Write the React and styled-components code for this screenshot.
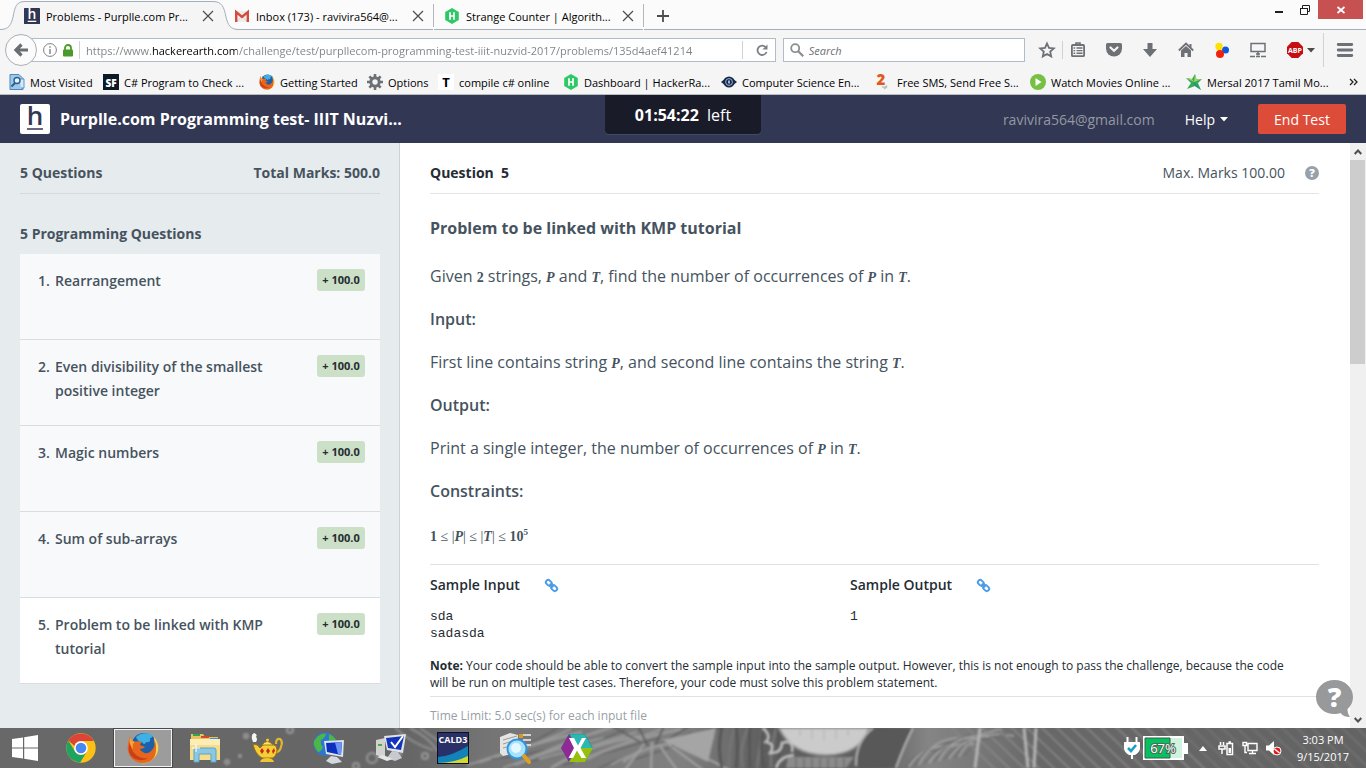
import React from "react";
import styled, { createGlobalStyle, css } from "styled-components";

const Global = createGlobalStyle`
  *, *::before, *::after { box-sizing: border-box; }
  body { margin: 0; font-family: "Open Sans", "Noto Sans", sans-serif; font-size: 14px; color: #46535e; }
  button, input { font: inherit; color: inherit; }
  button { border: 0; padding: 0; background: none; }
  a { color: inherit; text-decoration: none; }
  h1, h2, h3, p, ol, ul, pre { margin: 0; padding: 0; }
  ol, ul { list-style: none; }
  svg { display: block; flex: none; overflow: visible; }
`;

const Screen = styled.div`
  display: flex;
  flex-direction: column;
  height: 100vh;
  overflow: hidden;
`;

/* ---------- browser chrome ---------- */

const Chrome = styled.header`
  flex: none;
  font-size: 11px;
  color: #000;
  background: #f5f5f6;
  border-bottom: 1px solid #b9bcc0;
`;

const TabStrip = styled.div`
  display: flex;
  height: 30px;
  padding-left: 14px;
  background: #fbfbfb;
  border-bottom: 1px solid #a3afbb;
`;

const Tab = styled.div`
  position: relative;
  display: flex;
  align-items: center;
  gap: 6px;
  width: 210px;
  height: 31px;
  padding: 1px 9px 0 10px;
  border-right: 1px solid transparent;
  ${(p) => p.$divided && css`
    border-image: linear-gradient(#fbfbfb 5px, #b4b7ba 5px, #b4b7ba 26px, #fbfbfb 26px) 1;
    border-style: solid;
    border-width: 0 1px 0 0;
  `}
`;

const TabShape = styled.svg`
  position: absolute;
  left: -14px;
  top: 0;
`;

const TabTitle = styled.button`
  position: relative;
  flex: 1;
  min-width: 0;
  text-align: left;
  white-space: nowrap;
`;

const TabIcon = styled.span`
  position: relative;
`;

const TabClose = styled.button`
  position: relative;
  width: 12px;
`;

const NewTab = styled.button`
  margin: 2px 0 0 13px;
`;

const WindowButtons = styled.div`
  display: flex;
  align-items: flex-start;
  margin-left: auto;
  padding-right: 3px;
`;

const WindowButton = styled.button`
  display: grid;
  place-items: center;
  width: ${(p) => (p.$close ? 45 : 26)}px;
  height: 19px;
  background: ${(p) => (p.$close ? "#c75050" : "transparent")};
`;

const Toolbar = styled.div`
  display: flex;
  align-items: center;
  height: 40px;
  padding-left: 5px;
`;

const BackButton = styled.button`
  position: relative;
  z-index: 1;
  display: grid;
  place-items: center;
  width: 32px;
  height: 32px;
  border: 1px solid #a9afb6;
  border-radius: 50%;
  background: #fbfbfb;
`;

const AddressBar = styled.div`
  display: flex;
  flex: 743;
  align-items: center;
  gap: 6px;
  min-width: 0;
  height: 24px;
  margin-left: -7px;
  padding-left: 12px;
  border: 1px solid #b1bcc6;
  background: #fff;
`;

const Divider = styled.span`
  width: 1px;
  height: ${(p) => p.$h || 18}px;
  background: #d0d2d5;
`;

const AddressInput = styled.input`
  flex: 1;
  min-width: 0;
  padding: 0;
  border: 0;
  outline: 0;
  color: transparent;
  background: linear-gradient(90deg, #7c8085 65px, #000 65px, #000 151px, #7c8085 151px);
  background-clip: text;
  -webkit-background-clip: text;
`;

const ReloadButton = styled.button`
  display: grid;
  place-items: center;
  width: 26px;
`;

const SearchBox = styled.label`
  display: flex;
  flex: 238;
  align-items: center;
  gap: 5px;
  height: 24px;
  margin-left: 7px;
  padding-left: 6px;
  border: 1px solid #b1bcc6;
  background: #fff;
`;

const SearchInput = styled.input`
  flex: 1;
  min-width: 0;
  padding: 0;
  border: 0;
  outline: 0;
  background: none;
  &::placeholder { color: #6d7074; font-style: italic; opacity: 1; }
`;

const Tools = styled.div`
  display: flex;
  flex: none;
  align-items: center;
  padding: 0 4px 0 13px;
`;

const ToolButton = styled.button`
  display: flex;
  justify-content: center;
  align-items: center;
  gap: 4px;
  width: ${(p) => p.$w || 36}px;
`;

const Bookmarks = styled.nav`
  display: flex;
  align-items: center;
  height: 24px;
  padding: 0 8px 0 9px;
`;

const Bookmark = styled.a`
  display: flex;
  flex: none;
  align-items: center;
  gap: 5px;
  width: ${(p) => p.$w}px;
  white-space: nowrap;
`;

const MoreBookmarks = styled.button`
  margin-left: auto;
`;

/* ---------- test page ---------- */

const TestBar = styled.header`
  display: grid;
  flex: none;
  grid-template-columns: 1fr auto 1fr;
  height: 48px;
  padding: 0 20px;
  color: #fff;
  background: #323754;
`;

const Brand = styled.div`
  display: flex;
  align-items: center;
  gap: 10px;
  height: 48px;
`;

const BrandTitle = styled.h1`
  font-size: 16px;
  font-weight: 700;
  white-space: nowrap;
`;

const Timer = styled.div`
  width: 156px;
  height: 39px;
  border-radius: 0 0 4px 4px;
  font-size: 16px;
  line-height: 40px;
  text-align: center;
  background: #1a1b29;
  box-shadow: 0 1px 0 #44496a;
  b { margin-right: 4px; }
`;

const Account = styled.div`
  display: flex;
  justify-content: flex-end;
  align-items: center;
  gap: 30px;
  height: 48px;
`;

const Email = styled.span`
  color: #9399a1;
`;

const HelpMenu = styled.button`
  display: flex;
  align-items: center;
  gap: 5px;
`;

const EndTest = styled.button`
  width: 88px;
  height: 30px;
  border-radius: 2px;
  background: #dd4b39;
`;

const Body = styled.div`
  position: relative;
  display: flex;
  flex: 1;
  min-height: 0;
`;

const Sidebar = styled.aside`
  flex: none;
  width: 400px;
  padding: 20px 19px 0 20px;
  border-right: 1px solid #ccd2d6;
  background: #e6ebee;
`;

const SectionHead = styled.div`
  display: flex;
  justify-content: space-between;
  padding-bottom: 10px;
  border-bottom: 1px solid ${(p) => p.$line};
  line-height: 20px;
`;

const SideTitle = styled.h2`
  font-size: 14px;
  font-weight: 700;
  line-height: 20px;
`;

const QuestionList = styled.ol`
  margin-top: 10px;
`;

const QuestionGroup = styled.section`
  margin-top: 30px;
`;

const Question = styled.a`
  display: flex;
  align-items: flex-start;
  height: 86px;
  padding: 15px 15px 0 18px;
  border-bottom: 1px solid #d9dde0;
  font-weight: 600;
  line-height: 24px;
  background: ${(p) => (p.$current ? "#fff" : "#f8f9fb")};
`;

const QuestionNumber = styled.span`
  width: 17px;
`;

const QuestionName = styled.span`
  width: 222px;
`;

const Marks = styled.span`
  width: 48px;
  margin-left: auto;
  border-radius: 3px;
  font-size: 11px;
  font-weight: 700;
  line-height: 22px;
  text-align: center;
  color: #252c33;
  background: #cbe0c6;
`;

const Problem = styled.main`
  flex: 1;
  min-width: 0;
  overflow: hidden;
  padding: 20px 31px 0 30px;
  background: #fff;
`;

const Dark = styled.b`
  color: #252c33;
  white-space: pre;
`;

const MaxMarks = styled.span`
  display: flex;
  align-items: center;
  gap: 20px;
`;

const HelpDot = styled.button`
  width: 14px;
  height: 14px;
  border-radius: 50%;
  font-size: 11px;
  font-weight: 800;
  line-height: 14px;
  color: #fff;
  background: #98a1a9;
`;

const Statement = styled.article`
  display: flex;
  flex-direction: column;
  gap: 19px;
  padding: 22px 0 12px;
  border-bottom: 1px solid #dfe1e3;
  font-size: 16px;
  line-height: 24px;
`;

const ProblemTitle = styled.h2`
  padding-bottom: 5px;
  font-size: 16px;
  font-weight: 700;
`;

const Label = styled.h3`
  font-size: 16px;
  font-weight: 600;
`;

const MathText = styled.span`
  font-family: "Liberation Serif", serif;
  font-size: 14px;
  font-weight: 700;
  font-style: ${(p) => (p.$num ? "normal" : "italic")};
  line-height: 1;
`;

const Formula = styled.p`
  font-family: "Liberation Serif", serif;
  font-size: 14px;
  line-height: 30px;
  sup { font-size: 9px; line-height: 0; font-weight: 700; }
  i { font-weight: 700; }
`;

const Samples = styled.section`
  display: grid;
  grid-template-columns: 420px 1fr;
  padding: 8px 0 15px;
  color: #252c33;
`;

const SampleHead = styled.h3`
  display: flex;
  align-items: center;
  gap: 25px;
  margin-bottom: 11px;
  font-size: 14px;
  font-weight: 600;
  line-height: 24px;
`;

const SampleText = styled.pre`
  font-family: "Liberation Mono", monospace;
  font-size: 13px;
  line-height: 17px;
`;

const Note = styled.p`
  padding-bottom: 5px;
  border-bottom: 1px solid #dfe1e3;
  font-size: 12px;
  line-height: 17px;
  color: #252c33;
  b { font-weight: 700; }
`;

const Limit = styled.p`
  padding-top: 9px;
  font-size: 12px;
  line-height: 20px;
  color: #989fa6;
`;

const ScrollBar = styled.div`
  display: flex;
  flex: none;
  flex-direction: column;
  width: 16px;
  background: #f0f0f0;
`;

const ScrollArrow = styled.button`
  display: grid;
  place-items: center;
  height: 17px;
`;

const ScrollTrack = styled.div`
  flex: 1;
`;

const ScrollThumb = styled.div`
  width: 15px;
  height: 37%;
  background: #cdcdcd;
`;

const HelpBubble = styled.button`
  position: absolute;
  right: 13px;
  bottom: 10px;
`;

/* ---------- taskbar ---------- */

const Taskbar = styled.footer`
  position: relative;
  display: flex;
  flex: none;
  height: 40px;
  background: #666;
`;

const Wallpaper = styled.svg`
  position: absolute;
  inset: 0;
  width: 100%;
  height: 100%;
  overflow: hidden;
`;

const TaskButton = styled.button`
  position: relative;
  display: grid;
  place-items: center;
  width: ${(p) => (p.$start ? 50 : 62)}px;
  ${(p) => p.$active && css`
    width: 58px;
    margin: 1px 2px;
    border: 1px solid #f2f2f2;
    background: #9c9c9c;
    outline: 1px solid #4a4a4a;
  `}
`;

const Tray = styled.div`
  position: relative;
  display: flex;
  align-items: center;
  gap: 8px;
  margin-left: auto;
  padding-right: 10px;
  color: #fff;
`;

const Power = styled.div`
  display: flex;
  align-items: center;
  gap: 3px;
`;

const HiddenIcons = styled.button`
  display: grid;
  place-items: center;
  width: 14px;
`;

const Clock = styled.button`
  width: 66px;
  font-size: 11px;
  line-height: 17px;
  text-align: center;
  white-space: nowrap;
`;

/* ---------- icons ---------- */

const Svg = ({ w = 16, h = w, box, children, ...rest }) => (
  <svg width={w} height={h} viewBox={box || `0 0 ${w} ${h}`} fill="none" aria-hidden="true" {...rest}>{children}</svg>
);

const SANS = '"Open Sans", sans-serif';

const HLogo = ({ size = 30, light }) => (
  <Svg w={size} box="0 0 30 30">
    <rect width="30" height="30" rx={light ? 2 : 1} fill={light ? "#fff" : "#323754"} />
    <text x="15" y="21" textAnchor="middle" fontFamily={SANS} fontSize="26" fontWeight="600" fill={light ? "#323754" : "#fff"}>h</text>
    <path d="M7 25h16" stroke={light ? "#323754" : "#fff"} strokeWidth={light ? 1.5 : 2.4} />
  </Svg>
);

const Gmail = () => (
  <Svg>
    <path d="M1 3h14v11H1z" fill="#eee" />
    <path d="M3.2 13 8 8.4 12.8 13" stroke="#d5d5d5" />
    <path d="M2.2 14V4l5.8 5 5.8-5v10" stroke="#d54b3d" strokeWidth="2.4" />
  </Svg>
);

const HackerRank = () => (
  <Svg>
    <path d="M8 0 14.8 4v8L8 16 1.2 12V4z" fill="#2ec866" />
    <path d="M6 4.2v7.6M10 4.2v7.6M6 8h4" stroke="#fff" strokeWidth="1.7" />
  </Svg>
);

const Cross = () => (
  <Svg w={12}><path d="m1 1 10 10M11 1 1 11" stroke="#4c4c4c" strokeWidth="1.2" /></Svg>
);

const Firefox = ({ size = 16 }) => (
  <Svg w={size} box="0 0 32 32">
    <circle cx="17" cy="13.500" r="12.500" fill="#1d5fa8" />
    <path d="M9 5c4-4 11-5 16-2 1 2 0 3-2 3 1 3-1 5-4 4-1 3-3 2-4 0-3 0-5-2-6-5z" fill="#3fb0e3" />
    <path d="M27 5c5 6 6 14 1 20-4 5-9 7-14 6 8-3 14-8 14-16 0-4-1-7-1-10z" fill="#ffd24a" />
    <path d="M3 4C2 8 0 13 1 19c2 8 8 12 15 12 8 0 13-5 13-14 0-3 0-5-1-8 0 4-1 7-3 9-3 4-7 4-9 2-2-1-3-2-3-3 2 0 4-1 5-2-1-1-4-1-5-2 0-1 1-2 2-3-3-1-6-1-8 0-2-1-3-3-4-6z" fill="#e8661b" />
    <path d="M4 9c-1 4 0 9 4 13 3 3 8 5 13 4-7 5-17 1-19-6-1-4 0-8 2-11z" fill="#c8401a" />
    <path d="M3 5c1 2 2 4 5 5-2 1-3 4-2 7-3-3-4-8-3-12z" fill="#f7a23c" />
  </Svg>
);

const MostVisited = () => (
  <Svg>
    <path d="M1 .5h9l4 4v11H1z" fill="#9fc9ec" stroke="#4c87b8" />
    <path d="M11 5h4v9h-3" fill="#d7eafa" stroke="#5b95c4" />
    <circle cx="8" cy="6.500" r="3" fill="#e8f5ff" stroke="#2d5f8c" strokeWidth="1.400" />
    <path d="m6 9-3.500 3.500" stroke="#2d5f8c" strokeWidth="2" />
  </Svg>
);

const TextIcon = ({ t, bg, fg, size = 13, w = 700 }) => (
  <Svg>
    <rect width="16" height="16" fill={bg} />
    <text x="8" y="12.500" textAnchor="middle" fontFamily={SANS} fontSize={size} fontWeight={w} fill={fg}>{t}</text>
  </Svg>
);

const Gear = () => (
  <Svg>
    <circle cx="8" cy="8" r="4.200" stroke="#6d7074" strokeWidth="3" />
    {[0, 45, 90, 135].map((a) => (
      <path key={a} d="M8 0v3M8 13v3" stroke="#6d7074" strokeWidth="2.600" transform={`rotate(${a} 8 8)`} />
    ))}
  </Svg>
);

const Eye = () => (
  <Svg>
    <path d="M0 8q3-2 4-4 4-3 8 0 1 2 4 4-3 2-4 4-4 3-8 0-1-2-4-4z" fill="#14284d" />
    <circle cx="8" cy="8" r="3.400" stroke="#9fb3cf" /><path d="M7 6.500h2v3H7z" fill="#9fb3cf" />
  </Svg>
);

const Two = () => (
  <Svg>
    <text x="5" y="11" textAnchor="middle" fontFamily={SANS} fontSize="15" fontWeight="800" fill="#e2571b">2</text>
    <path d="M6 12.500q3 2 5-1M8 15l3-2" stroke="#b9c4bd" strokeWidth="1.500" />
  </Svg>
);

const Play = () => (
  <Svg><circle cx="8" cy="8" r="8" fill="#76c043" /><path d="M5.500 4v8l6-4z" fill="#fff" /></Svg>
);

const StarMark = () => (
  <Svg>
    <path d="M9 0 10.500 5.500 16 5l-4 4 3 7-6-4-8 3 4-6L0 4l6 1z" fill="#35a85c" />
    <path d="M9 0 8 8l8-3-5.500.5zM0 4l8 4L6 5z" fill="#a3d55d" />
    <path d="m8 8 7 8-6-4z" fill="#1f8f8a" />
  </Svg>
);

const G = "#6d7074";

const AbStar = () => <Svg><path d="m8 1.500 2 4.400 4.800.5-3.600 3.200 1 4.800L8 12l-4.200 2.400 1-4.800L1.200 6.400 6 5.900z" stroke={G} strokeWidth="1.800" /></Svg>;
const ListIcon = () => (
  <Svg>
    <path d="M6 3V1h4v2" stroke={G} strokeWidth="1.600" />
    <rect x="1.900" y="3" width="12.200" height="11.200" rx="1" stroke={G} strokeWidth="1.800" />
    <path d="M3.500 6h1.700M6.500 6h6M3.500 8.600h1.700M6.500 8.600h6M3.500 11.200h1.700M6.500 11.200h6" stroke={G} strokeWidth="1.400" />
  </Svg>
);
const Pocket = () => <Svg><path d="M1.500 1h13Q16 1 16 2.500v4A8 8 0 0 1 0 6.500v-4Q0 1 1.500 1z" fill={G} /><path d="m4.500 5.500 3.500 3.300 3.500-3.300" stroke="#f5f5f6" strokeWidth="2.200" strokeLinecap="round" /></Svg>;
const Down = () => <Svg><path d="M5.500 1h5v6H15l-7 8-7-8h4.500z" fill={G} /></Svg>;
const Home = () => <Svg><path d="M.8 8.500 8 1.600l7.200 6.900" stroke={G} strokeWidth="1.800" /><path d="M3 8.500 8 4l5 4.500V15H9.500v-4h-3v4H3zM11.500 2h2v4l-2-2z" fill={G} /></Svg>;
const Dots = () => <Svg><circle cx="11.500" cy="8" r="3.500" fill="#0a5be0" /><circle cx="5" cy="4.500" r="3.700" fill="#ffe100" /><circle cx="6" cy="12" r="4" fill="#f3200c" /></Svg>;
const Monitor = () => <Svg><path d="M1 1.500h14v8H1zM6 12h4M8 9.500v4" stroke={G} strokeWidth="1.500" /><path d="M0 14.500h5m6 0h5M6 14.500h4" stroke={G} strokeWidth="1.500" /></Svg>;
const Abp = () => (
  <Svg>
    <path d="M4.700 0h6.600L16 4.700v6.600L11.300 16H4.700L0 11.300V4.700z" fill="#c70d12" />
    <text x="8" y="10.500" textAnchor="middle" fontFamily={SANS} fontSize="7" fontWeight="700" fill="#fff">ABP</text>
  </Svg>
);
const Menu = () => <Svg><path d="M1.200 2.500h13.600M1.200 8h13.600M1.200 13.500h13.600" stroke={G} strokeWidth="2.800" strokeLinecap="round" /></Svg>;
const Caret = ({ c = "#4c4c4c", w = 8 }) => <Svg w={w} h={5} box="0 0 8 5"><path d="M0 0h8L4 4.500z" fill={c} /></Svg>;
const LinkIcon = () => (
  <Svg w={13}>
    <g stroke="#4a9be8" strokeWidth="1.900" transform="rotate(45 6.500 6.500)">
      <rect x="-.5" y="4.200" width="6.500" height="4.600" rx="2.300" /><rect x="7" y="4.200" width="6.500" height="4.600" rx="2.300" /><path d="M4 6.500h5" />
    </g>
  </Svg>
);

/* taskbar drawings */
const WindowsLogo = () => <Svg w={28} box="0 0 28 28"><path d="M1 5l11-1.600v10H1zM13.200 3.200 27 1v12.400H13.200zM1 14.600h11v10L1 23zM13.200 14.600H27V27l-13.800-2.200z" fill="#fff" /></Svg>;
const ChromeLogo = () => (
  <Svg w={30} box="0 0 30 30">
    <circle cx="15" cy="15" r="14.700" fill="#fbc116" />
    <path d="M2.300 7.600A14.700 14.700 0 0 1 27.800 8H15a7 7 0 0 0-6.600 4.800z" fill="#dc4437" />
    <path d="M2.300 7.600A14.700 14.700 0 0 0 14 29.700l7-11.200a7 7 0 0 1-12.600-1z" fill="#1da462" />
    <circle cx="15" cy="15" r="6.800" fill="#fff" /><circle cx="15" cy="15" r="5.300" fill="#4587f3" />
  </Svg>
);
const Folder = () => (
  <Svg w={32}>
    <path d="M2 7V2h12l2 3h13v5H2z" fill="#e9c35b" />
    <path d="M4 2h7v2H4z" fill="#2ea84a" /><path d="M12 4h8v2h-8z" fill="#d9462f" /><path d="M21 6h8v2h-8z" fill="#3f8fe0" />
    <path d="M1 7h30v21H1z" fill="#f5dd8a" /><path d="M1 7h30v6H1z" fill="#fbedb5" />
    <path d="M5 30V18q0-2 2-2h18q2 0 2 2v12h-5v-8H10v8z" fill="#8cc8e4" stroke="#5aa3c8" />
    <path d="M7 12v8M3 16h8" stroke="#fff" />
  </Svg>
);
const Lamp = () => (
  <Svg w={32}>
    <path d="M2 10q-3-7 1-9 4 1 2 4 2 2 0 5z" fill="#f5f5f5" />
    <path d="M25 12q0-6 4-5 3 2 1 8-1 5-7 6" stroke="#e3b52f" strokeWidth="2.200" />
    <path d="M2 12q5 0 7 4 6-8 16-2 3 7-3 12H11Q4 22 2 12z" fill="#f3cf36" stroke="#9a6f10" />
    <path d="M11 13q5-7 11 0z" fill="#fbe36b" stroke="#a87a14" /><circle cx="16.500" cy="8" r="1.500" fill="#f1cb39" />
    <path d="M9 30q1-4 7-4t7 4z" fill="#f0c634" />
    <path d="m11 16 2 3-2 3-2-3zM17 16l2 3-2 3-2-3zM23 16l1 3-2 3-1-3z" fill="#c92a1f" />
  </Svg>
);
const GlobePc = () => (
  <Svg w={32}>
    <circle cx="12" cy="12" r="11.500" fill="#2b78d4" />
    <path d="M4 5q6-5 9-3-1 4-5 6-1 5 2 7-2 5-5 5Q0 14 1 9zM16 2q5 2 7 6l-7 1z" fill="#4cb648" />
    <path d="m11 9 20-1-1 17-17-3z" fill="#dfe3ea" /><path d="m13 11 16-1-1 13-14-3z" fill="#0d2fc0" /><path d="m22 10.500 7-.5-1 13-3-.7z" fill="#6c94f3" />
    <path d="m18 24 6 1 5 5-10 2-6-3z" fill="#d4d8df" />
  </Svg>
);
const CheckPc = () => (
  <Svg w={32}>
    <path d="M1 8l9-2v20l-9-3z" fill="#d2d3d0" /><path d="M3 13h4" stroke="#42b23c" strokeWidth="2" />
    <path d="m9 4 22-2-3 19-16-3z" fill="#dfe3ea" /><path d="m11 6 18-2-3 14-13-2z" fill="#1233b8" />
    <path d="m16 10 4 5 8-11" stroke="#fff" strokeWidth="2" /><path d="m17 19 6 1 4 6-7 3-8-3z" fill="#c6c9ce" /><path d="m2 25 10 4 6-2-10-4z" fill="#e3e5e8" />
  </Svg>
);
const Cald = () => (
  <Svg w={32}>
    <rect x=".5" y=".5" width="31" height="31" fill="#2a3168" stroke="#0c0f22" />
    <path d="M1 25q14-1 30-11v17H1z" fill="#1283b8" /><path d="M1 31q16 0 30-7v7z" fill="#d3da2b" />
    <text x="16" y="11" textAnchor="middle" fontFamily={SANS} fontSize="9" fontWeight="700" fill="#fff">CALD3</text>
  </Svg>
);
const ServerSearch = () => (
  <Svg w={32}>
    <path d="m1 5 10-4 8 2v17L4 24 1 21z" fill="#e4e4e2" /><path d="m4 8 14-4M4 12l10-3M4 16l7-2" stroke="#9b9b98" />
    <path d="M20 2h4v4h-4zM20 8h4v4h-4z" fill="#d79b23" /><path d="M24 3h8M24 8h8M24 13h8" stroke="#f1f1f1" strokeWidth="1.500" />
    <circle cx="18" cy="17" r="9.500" fill="#a9e2ff" stroke="#2f95e0" strokeWidth="2" /><circle cx="17" cy="16" r="5" fill="#e6f8ff" />
    <path d="m25 24 5 6" stroke="#e0a01e" strokeWidth="4" strokeLinecap="round" />
  </Svg>
);
const Xamarin = () => (
  <Svg w={32}>
    <path d="M8 2h16l8 14-8 14H8L0 16z" fill="#1f9e97" />
    <path d="M8 2 0 16l8 14 8-14z" fill="#8d2a94" /><path d="M8 30h16l8-14H16z" fill="#97bf0d" /><path d="M9 2.500h14.500L31 16H16z" fill="#2db7b2" />
    <path d="M8 6h5l4 7.500L21 6h4l-5.500 10L25 26h-4.500L16 18.500 12 26H7.500L13 16z" fill="#fff" />
  </Svg>
);
const Plug = () => <Svg w={16} h={24}><path d="M3.500 1v6M12.500 1v6M8 18v5" stroke="#fff" strokeWidth="2" /><path d="M0 6h16v6q0 4-5 7H5q-5-3-5-7z" fill="#fff" /><path d="m4 12 3 3 5-6" stroke="#1a9fc9" strokeWidth="2.600" /></Svg>;
const Battery = () => (
  <Svg w={45} h={24}>
    <path d="M0 0h41v7h4v11h-4v6H0z" fill="#fff" /><path d="M2 2h37v20H2z" fill="#d0f2df" /><path d="M2 2h25v20H2z" fill="#07c160" stroke="#3d5c4a" />
    <text x="20" y="17" textAnchor="middle" fontFamily={SANS} fontSize="13" fill="#fff" stroke="#4d6b58" strokeWidth="2" paintOrder="stroke">67%</text>
  </Svg>
);
const TrayBattery = () => <Svg><path d="M2.500 2v3M5.500 2v3M1 6h6v3H1zM4 9v5" stroke="#fff" strokeWidth="1.500" /><path d="M9 3.500h5.500v11H9zM10.500 2h2.500" stroke="#fff" strokeWidth="1.500" /><path d="M10.500 8h2.500v5h-2.500z" fill="#fff" /></Svg>;
const TrayNet = () => <Svg><path d="M6 3.500h9v7H6zM7 13.500h7M10.500 10.500v3M1 2.500h3.500v3H1zM3 5.500v7h2" stroke="#fff" strokeWidth="1.400" /></Svg>;
const TrayVolume = () => <Svg><path d="M0 5.500h3L8 1v14l-5-4.500H0z" fill="#fff" /><circle cx="11" cy="11" r="4" fill="#e01b1b" stroke="#fff" /><path d="m8.500 9 5 4" stroke="#fff" strokeWidth="1.400" /></Svg>;

const range = (n) => Array.from({ length: n }, (_, i) => i);

const WallpaperArt = () => (
  <Wallpaper viewBox="0 0 1366 40" preserveAspectRatio="none" fill="none" aria-hidden="true">
    <defs>
      <linearGradient id="base" x2="1">
        <stop offset="0" stopColor="#686868" /><stop offset=".3" stopColor="#666" /><stop offset=".36" stopColor="#757575" />
        <stop offset=".5" stopColor="#808080" /><stop offset=".56" stopColor="#5e5e5e" /><stop offset=".64" stopColor="#606060" />
        <stop offset=".68" stopColor="#858585" /><stop offset=".76" stopColor="#686868" /><stop offset="1" stopColor="#636363" />
      </linearGradient>
      <filter id="soft"><feGaussianBlur stdDeviation="0.8" /></filter>
    </defs>
    <rect width="1366" height="40" fill="url(#base)" />
    <g filter="url(#soft)">
      {[[227, 34, 2], [246, 8, 2], [290, 2, 3], [356, 38, 3], [372, 30, 5], [398, 25, 3], [425, 28, 3], [240, 28, 1]].map(([x, y, r]) => (
        <circle key={x} cx={x} cy={y} r={r} stroke="#999" strokeWidth="2" />
      ))}
      <path d="M395 0q18 16 38 22M410 0q20 10 28 24M420 0l20 14" stroke="#8e8e8e" strokeWidth="2" />
      {range(16).map((i) => (
        <path key={i} d={`M${455 + i * 12} ${40 - (i % 4) * 3}Q${520 + i * 9} ${26 - (i % 3) * 6} ${560 + i * 11} ${-2 + (i % 5) * 3}`} stroke={i % 3 ? "#989898" : "#575757"} strokeWidth={1 + (i % 3)} />
      ))}
      {range(10).map((i) => (
        <path key={i} d={`M${640 + i * 4} ${14 + (i % 3) * 2}L${612 + i * 13} ${i % 2 ? 42 : -2}`} stroke={i % 2 ? "#a3a3a3" : "#606060"} strokeWidth="2" />
      ))}
      <path d="M662 12l54-12-8 34z" fill="#a5a5a5" />
      {range(9).map((i) => (
        <path key={i} d={`M${722 + i * 7} 40q${(i % 3) * 4 - 5}-20 ${(i % 2) * 6}-42`} stroke={i % 2 ? "#757575" : "#565656"} strokeWidth="3" />
      ))}
      <path d="M779 0Q792 27 826 27T869 0z" fill="#cbcbcb" stroke="#969696" strokeWidth="2" />
      <path d="M800 0v8M812 0v11M824 0v12M836 0v11M848 0v8" stroke="#b2b2b2" />
      <path d="M788 29h66l-8 11h-60z" fill="#8b8b8b" />
      {range(7).map((i) => <path key={i} d={`M${796 + i * 8} 30v10`} stroke="#747474" strokeWidth="2" />)}
      <path d="M763 0q9 8 3 14 10 2 4 11 12 0 12-10 12-4 10 9M776 40q4-12 18-13" stroke="#c0c0c0" strokeWidth="2.500" />
      <path d="M872 0q-20 16-13 40h37q6-22 17-40z" fill="#595959" /><path d="M913 0q-9 18-17 40M873 0q-18 14-17 38" stroke="#b0b0b0" strokeWidth="2" />
      {range(13).map((i) => (
        <path key={i} d={`M${904 + i * 5} ${40 - i}q14-${20 + (i % 4) * 3} ${44 + i}-${18 + (i % 5) * 3}`} stroke={i % 2 ? "#a6a6a6" : "#707070"} strokeWidth="1.500" />
      ))}
      {range(30).map((i) => (
        <path key={i} d={`M${950 + i * 15} -2l48 46`} stroke={i > 14 ? "#757575" : "#888"} strokeWidth="1.600" />
      ))}
      <path d="M980 0l-5 40M1024 0q2 20 4 40M1036 0l-2 40" stroke="#b4b4b4" strokeWidth="3" />
    </g>
  </Wallpaper>
);

/* ---------- data ---------- */

const tabs = [
  { title: "Problems - Purplle.com Pr...", icon: <HLogo size={16} />, active: true },
  { title: "Inbox (173) - ravivira564@...", icon: <Gmail />, divided: true },
  { title: "Strange Counter | Algorith...", icon: <HackerRank />, divided: true },
];

const bookmarks = [
  ["Most Visited", <MostVisited />, 94],
  ["C# Program to Check ...", <TextIcon t="SF" bg="#0b1a26" fg="#fff" size={10} w={800} />, 156],
  ["Getting Started", <Firefox />, 108],
  ["Options", <Gear />, 71],
  ["compile c# online", <TextIcon t="T" bg="#fff" fg="#000" size={13} />, 125],
  ["Dashboard | HackerRa...", <HackerRank />, 158],
  ["Computer Science En...", <Eye />, 155],
  ["Free SMS, Send Free S...", <Two />, 154],
  ["Watch Movies Online ...", <Play />, 156],
  ["Mersal 2017 Tamil Mo...", <StarMark />, 156],
];

const questions = [
  "Rearrangement",
  "Even divisibility of the smallest positive integer",
  "Magic numbers",
  "Sum of sub-arrays",
  "Problem to be linked with KMP tutorial",
];

const tasks = [
  ["Chrome", <ChromeLogo />],
  ["Firefox", <Firefox size={32} />, true],
  ["File Explorer", <Folder />],
  ["Lamp", <Lamp />],
  ["Network", <GlobePc />],
  ["System", <CheckPc />],
  ["Dictionary", <Cald />],
  ["Server search", <ServerSearch />],
  ["Xamarin", <Xamarin />],
];

const P = () => <MathText>P</MathText>;
const T = () => <MathText>T</MathText>;

/* ---------- sections ---------- */

function BrowserChrome() {
  return (
    <Chrome>
      <TabStrip>
        {tabs.map((t) => (
          <Tab key={t.title} $divided={t.divided}>
            {t.active && (
              <TabShape width="240" height="31" viewBox="0 0 240 31" fill="none" aria-hidden="true">
                <path d="M0 29.500C9 29.500 11 25 13 17 15 7 16 1.500 25 1.500H213C222 1.500 224 7 226 17 228 25 230 29.500 239 29.500V31H0z" fill="#f5f5f6" />
                <path d="M0 29.500C9 29.500 11 25 13 17 15 7 16 1.500 25 1.500H213C222 1.500 224 7 226 17 228 25 230 29.500 239 29.500" stroke="#a3afbb" />
              </TabShape>
            )}
            <TabIcon>{t.icon}</TabIcon>
            <TabTitle>{t.title}</TabTitle>
            <TabClose aria-label="Close tab"><Cross /></TabClose>
          </Tab>
        ))}
        <NewTab aria-label="New tab"><Svg w={12}><path d="M6 0v12M0 6h12" stroke="#4c4c4c" strokeWidth="1.800" /></Svg></NewTab>
        <WindowButtons>
          <WindowButton aria-label="Minimize"><Svg w={10}><path d="M1 7h8" stroke="#1e1e1e" strokeWidth="2" /></Svg></WindowButton>
          <WindowButton aria-label="Restore"><Svg w={10}><path d="M.5 3.500h7v6h-7zM2.500 3V.5h7v6H8M0 3.500h8" stroke="#1e1e1e" /></Svg></WindowButton>
          <WindowButton $close aria-label="Close"><Svg w={8}><path d="m.5 1 7 6M7.500 1l-7 6" stroke="#fff" strokeWidth="1.800" /></Svg></WindowButton>
        </WindowButtons>
      </TabStrip>
      <Toolbar>
        <BackButton aria-label="Back"><Svg w={16}><path d="M15 8H4M8.500 2.500 3 8l5.500 5.500" stroke="#6a6d71" strokeWidth="3.200" /></Svg></BackButton>
        <AddressBar>
          <Svg w={14}><circle cx="7" cy="7" r="6.400" stroke="#7c8085" /><path d="M7 6v5M7 3.200v1.500" stroke="#7c8085" strokeWidth="1.400" /></Svg>
          <Svg w={10} h={13}><path d="M2 6V4a3 3 0 0 1 6 0v2" stroke="#4a9b2a" strokeWidth="1.800" /><rect y="5.500" width="10" height="7" rx="1" fill="#4a9b2a" /></Svg>
          <Divider />
          <AddressInput aria-label="Address" defaultValue="https://www.hackerearth.com/challenge/test/purpllecom-programming-test-iiit-nuzvid-2017/problems/135d4aef41214" />
          <Divider />
          <ReloadButton aria-label="Reload"><Svg w={12}><path d="M10 3.500A4.700 4.700 0 1 0 10.600 8" stroke="#7c8085" strokeWidth="1.800" /><path d="M11.500.5v5h-5z" fill="#7c8085" /></Svg></ReloadButton>
        </AddressBar>
        <SearchBox>
          <Svg w={14}><circle cx="5.200" cy="5.200" r="4" stroke="#8a8d91" strokeWidth="1.800" /><path d="m8.200 8.200 5 5" stroke="#8a8d91" strokeWidth="2.200" /></Svg>
          <SearchInput aria-label="Search" placeholder="Search" />
        </SearchBox>
        <Tools>
          <ToolButton $w={18} aria-label="Bookmark this page"><AbStar /></ToolButton>
          <ToolButton $w={12} as="span"><Divider /></ToolButton>
          <ToolButton $w={20} aria-label="Library"><ListIcon /></ToolButton>
          <ToolButton $w={52} aria-label="Pocket"><Pocket /></ToolButton>
          <ToolButton $w={20} aria-label="Downloads"><Down /></ToolButton>
          <ToolButton $w={52} aria-label="Home"><Home /></ToolButton>
          <ToolButton $w={20} aria-label="Color picker"><Dots /></ToolButton>
          <ToolButton $w={52} aria-label="Responsive view"><Monitor /></ToolButton>
          <ToolButton $w={34} aria-label="Adblock"><Abp /><Caret /></ToolButton>
          <ToolButton $w={10} as="span"><Divider $h={34} /></ToolButton>
          <ToolButton $w={34} aria-label="Menu"><Menu /></ToolButton>
        </Tools>
      </Toolbar>
      <Bookmarks aria-label="Bookmarks">
        {bookmarks.map(([name, icon, w]) => (
          <Bookmark key={name} href="#" $w={w}>{icon}{name}</Bookmark>
        ))}
        <MoreBookmarks aria-label="More bookmarks"><Svg w={9} h={8}><path d="m1 1 3 3-3 3M5 1l3 3-3 3" stroke="#222" strokeWidth="1.300" /></Svg></MoreBookmarks>
      </Bookmarks>
    </Chrome>
  );
}

function TestPage() {
  return (
    <>
      <TestBar>
        <Brand><HLogo light /><BrandTitle>Purplle.com Programming test- IIIT Nuzvi...</BrandTitle></Brand>
        <Timer><b>01:54:22</b> left</Timer>
        <Account>
          <Email>ravivira564@gmail.com</Email>
          <HelpMenu>Help <Caret c="#fff" /></HelpMenu>
          <EndTest>End Test</EndTest>
        </Account>
      </TestBar>
      <Body>
        <Sidebar>
          <SectionHead $line="#d5dade">
            <SideTitle>5 Questions</SideTitle>
            <SideTitle as="b">Total Marks: 500.0</SideTitle>
          </SectionHead>
          <QuestionGroup>
            <SideTitle>5 Programming Questions</SideTitle>
            <QuestionList>
              {questions.map((q, i) => (
                <li key={q}>
                  <Question href="#" $current={i === 4}>
                    <QuestionNumber>{i + 1}.</QuestionNumber>
                    <QuestionName>{q}</QuestionName>
                    <Marks>+ 100.0</Marks>
                  </Question>
                </li>
              ))}
            </QuestionList>
          </QuestionGroup>
        </Sidebar>
        <Problem>
          <SectionHead $line="#e3e5e7">
            <Dark>Question  5</Dark>
            <MaxMarks>Max. Marks 100.00 <HelpDot aria-label="Marks help">?</HelpDot></MaxMarks>
          </SectionHead>
          <Statement>
            <ProblemTitle>Problem to be linked with KMP tutorial</ProblemTitle>
            <p>Given <MathText $num>2</MathText> strings, <P /> and <T />, find the number of occurrences of <P /> in <T />.</p>
            <Label>Input:</Label>
            <p>First line contains string <P />, and second line contains the string <T />.</p>
            <Label>Output:</Label>
            <p>Print a single integer, the number of occurrences of <P /> in <T />.</p>
            <Label>Constraints:</Label>
            <Formula><b>1</b> ≤ |<i>P</i>| ≤ |<i>T</i>| ≤ <b>10</b><sup>5</sup></Formula>
          </Statement>
          <Samples>
            <div><SampleHead>Sample Input <LinkIcon /></SampleHead><SampleText>{"sda\nsadasda"}</SampleText></div>
            <div><SampleHead>Sample Output <LinkIcon /></SampleHead><SampleText>1</SampleText></div>
          </Samples>
          <Note>
            <b>Note:</b> Your code should be able to convert the sample input into the sample output. However, this is not enough to pass the challenge, because the code<br />
            will be run on multiple test cases. Therefore, your code must solve this problem statement.
          </Note>
          <Limit>Time Limit: 5.0 sec(s) for each input file</Limit>
        </Problem>
        <ScrollBar>
          <ScrollArrow aria-label="Scroll up"><Svg w={8} h={6}><path d="m.7 5 3.300-3.500L7.300 5" stroke="#505050" strokeWidth="2" /></Svg></ScrollArrow>
          <ScrollTrack><ScrollThumb /></ScrollTrack>
          <ScrollArrow aria-label="Scroll down"><Svg w={8} h={6}><path d="m.7 1 3.300 3.500L7.300 1" stroke="#505050" strokeWidth="2" /></Svg></ScrollArrow>
        </ScrollBar>
        <HelpBubble aria-label="Help">
          <Svg w={37} h={38}>
            <path d="M18.500 0C29 0 37 7.500 37 17c0 5-2 9-5.500 12 0 3 .5 5 2.500 8-4 0-7-1-9.500-4-2 .8-4 1-6 1C8 34 0 26.500 0 17S8 0 18.500 0z" fill="#97999b" />
            <text x="18.500" y="27" textAnchor="middle" fontFamily={SANS} fontSize="27" fontWeight="800" fill="#fff">?</text>
          </Svg>
        </HelpBubble>
      </Body>
    </>
  );
}

function DesktopTaskbar() {
  return (
    <Taskbar>
      <WallpaperArt />
      <TaskButton $start aria-label="Start"><WindowsLogo /></TaskButton>
      {tasks.map(([name, icon, active]) => (
        <TaskButton key={name} aria-label={name} $active={active}>{icon}</TaskButton>
      ))}
      <Tray>
        <Power><Plug /><Battery /></Power>
        <HiddenIcons aria-label="Show hidden icons"><Svg w={8} h={5}><path d="M0 5h8L4 0z" fill="#fff" /></Svg></HiddenIcons>
        <TrayBattery />
        <TrayNet />
        <TrayVolume />
        <Clock>3:03 PM<br />9/15/2017</Clock>
      </Tray>
    </Taskbar>
  );
}

export default function App() {
  return (
    <Screen>
      <Global />
      <BrowserChrome />
      <TestPage />
      <DesktopTaskbar />
    </Screen>
  );
}
